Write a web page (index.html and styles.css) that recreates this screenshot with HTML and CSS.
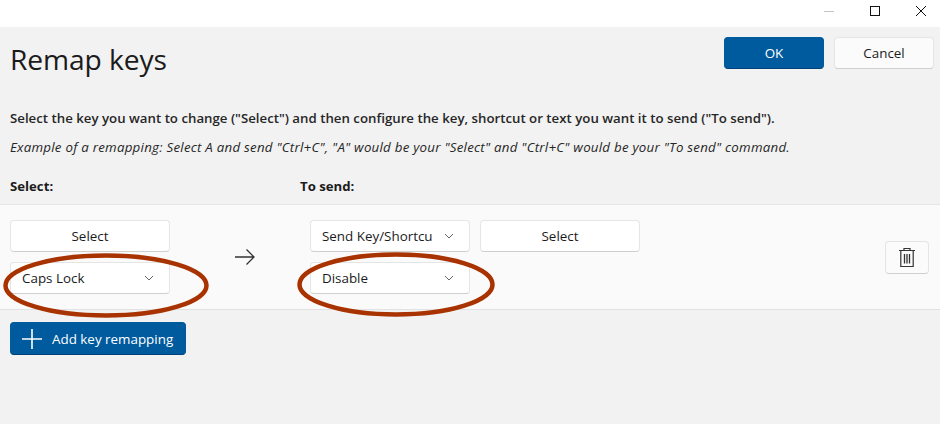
FILE: index.html
```html
<!DOCTYPE html>
<html lang="en">
<head>
<meta charset="utf-8">
<title>Remap keys</title>
<link rel="stylesheet" href="styles.css">
</head>
<body>
<div class="window">
  <div class="titlebar">
    <span class="win-btn"><svg width="12" height="12" viewBox="0 0 12 12"><path d="M1 6.500H11" stroke="#c4c4c4" fill="none"/></svg></span>
    <span class="win-btn"><svg width="12" height="12" viewBox="0 0 12 12"><rect x="1.500" y="1.500" width="9" height="9" stroke="#111" fill="none"/></svg></span>
    <span class="win-btn"><svg width="12" height="12" viewBox="0 0 12 12"><path d="M1 1L11 11M11 1L1 11" stroke="#111" fill="none"/></svg></span>
  </div>
  <header class="head">
    <h1 class="title">Remap keys</h1>
    <div class="actions">
      <button class="btn btn-primary btn-action">OK</button>
      <button class="btn btn-action btn-cancel">Cancel</button>
    </div>
  </header>
  <p class="lead">Select the key you want to change ("Select") and then configure the key, shortcut or text you want it to send ("To send").</p>
  <p class="example">Example of a remapping: Select A and send "Ctrl+C", "A" would be your "Select" and "Ctrl+C" would be your "To send" command.</p>
  <div class="cols">
    <span class="col-select">Select:</span>
    <span>To send:</span>
  </div>
  <section class="row">
    <div class="stack col-from">
      <button class="btn field center">Select</button>
      <button class="btn field">Caps Lock<svg class="chev" width="10" height="6" viewBox="0 0 10 6"><path d="M1 1L5 5L9 1" stroke="#666" fill="none"/></svg></button>
    </div>
    <div class="arrow"><svg width="22" height="20" viewBox="0 0 22 20"><path d="M1 10H20M12.500 2.500L20 10L12.500 17.500" stroke="#333" stroke-width="1.300" fill="none"/></svg></div>
    <div class="stack col-to">
      <div class="pair">
        <button class="btn field">Send Key/Shortcu<svg class="chev" width="10" height="6" viewBox="0 0 10 6"><path d="M1 1L5 5L9 1" stroke="#666" fill="none"/></svg></button>
        <button class="btn field center">Select</button>
      </div>
      <button class="btn field">Disable<svg class="chev" width="10" height="6" viewBox="0 0 10 6"><path d="M1 1L5 5L9 1" stroke="#666" fill="none"/></svg></button>
    </div>
    <button class="btn trash"><svg width="18" height="21" viewBox="0 0 18 21"><path d="M1 3.500H17M6 3.500V1.500H12V3.500M2.800 3.500V19.500H15.200V3.500" stroke="#333" stroke-width="1.200" fill="none"/><path d="M6.500 7V16.500M9 7V16.500M11.500 7V16.500" stroke="#333" stroke-width="1.300" fill="none"/></svg></button>
  </section>
  <button class="btn btn-primary add"><svg width="22" height="22" viewBox="0 0 22 22"><path d="M11 1V21M1 11H21" stroke="#fff" stroke-width="1.600" fill="none"/></svg>Add key remapping</button>
  <svg class="marks" width="940" height="424" viewBox="0 0 940 424">
    <ellipse cx="106" cy="285.500" rx="100.500" ry="30" fill="none" stroke="#a83200" stroke-width="4.500"/>
    <ellipse cx="396" cy="284.500" rx="96.500" ry="30" fill="none" stroke="#a83200" stroke-width="4.500"/>
  </svg>
</div>
</body>
</html>
```
FILE: styles.css
```css
* { box-sizing: border-box; }
html, body { margin: 0; padding: 0; }
body { font-family: "Open Sans", "Noto Sans", sans-serif; color: #1b1b1b; }
.window { position: relative; width: 940px; height: 424px; background: #f2f2f2; overflow: hidden; }
.titlebar { height: 27px; background: #fff; display: flex; justify-content: flex-end; align-items: center; gap: 34px; padding: 0 13px 5px 0; }
.win-btn { display: flex; width: 12px; height: 12px; }
.head { display: flex; justify-content: space-between; align-items: flex-start; padding: 10px 6px 0 10px; height: 81px; }
.title { margin: 0; font-size: 28.200px; font-weight: 400; line-height: 44px; letter-spacing: -0.100px; }
.actions { display: flex; gap: 10px; }
.btn { font-family: inherit; font-size: 13.400px; color: #1b1b1b; background: #fff; border: 1px solid #e5e5e5; border-bottom-color: #cfcfcf; border-radius: 4px; padding: 0; }
.btn-action { width: 100px; height: 32px; }
.btn-cancel { background: #fbfbfb; }
.btn-primary { background: #005a9e; color: #fff; border-color: #005a9e; border-bottom-color: #00437a; }
.lead { margin: 0; padding-left: 10px; font-size: 13.250px; font-weight: 600; line-height: 20px; white-space: nowrap; color: #262626; }
.example { margin: 9px 0 0; padding-left: 10px; font-size: 13.300px; font-style: italic; line-height: 20px; letter-spacing: 0.245px; white-space: nowrap; color: #262626; }
.cols { display: flex; padding: 0 0 0 10px; margin-top: 19px; height: 28px; font-size: 13.200px; font-weight: 700; line-height: 20px; }
.col-select { width: 290px; }
.row { display: flex; align-items: flex-start; height: 106px; background: #fafafa; border-top: 1px solid #e5e5e5; border-bottom: 1px solid #e2e2e2; padding: 15px 11px 0 10px; }
.stack { display: flex; flex-direction: column; gap: 10px; }
.pair { display: flex; gap: 10px; }
.field { width: 160px; height: 32px; display: flex; align-items: center; justify-content: space-between; padding: 0 15px 0 11px; }
.center { justify-content: center; padding: 0; }
.arrow { width: 140px; height: 74px; padding: 27px 0 0 64px; }
.arrow svg { display: block; }
.col-to { width: 330px; }
.trash { width: 44px; height: 33px; margin-left: auto; margin-top: 21px; display: flex; align-items: center; justify-content: center; background: #fbfbfb; }
.add { margin: 12px 0 0 10px; width: 176px; height: 33px; display: flex; align-items: center; gap: 9px; padding-left: 10px; white-space: nowrap; }
.marks { position: absolute; left: 0; top: 0; pointer-events: none; }
```
